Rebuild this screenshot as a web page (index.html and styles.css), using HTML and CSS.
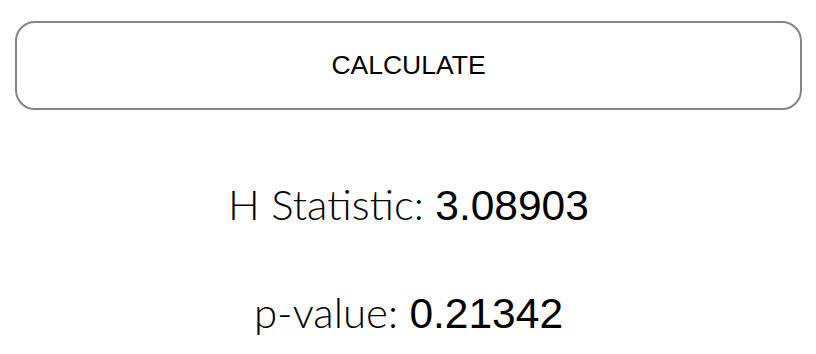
FILE: index.html
```html
<!DOCTYPE html>
<html lang="en">
<head>
    <meta charset="UTF-8">
    <meta name="viewport" content="width=device-width, initial-scale=1.0">
    <title>Kruskal-Wallis Test</title>
    <link rel="stylesheet" href="styles.css">
</head>
<body>

    <div class="page">
        <button class="calc-button" onclick="calculate()">CALCULATE</button>

        <div class="results">
            <p class="result">H Statistic: <span class="value" id="hStat">3.08903</span></p>
            <p class="result">p-value: <span class="value" id="pValue">0.21342</span></p>
        </div>
    </div>

    <script>
        function calculate() {
            document.getElementById("hStat").textContent = "3.08903";
            document.getElementById("pValue").textContent = "0.21342";
        }
    </script>

</body>
</html>
```

FILE: styles.css
```css
body {
    margin: 0;
    background-color: #fff;
    color: #000;
    font-family: "Liberation Sans", Arial, sans-serif;
}
.page {
    padding: 21px 14px 0 15px;
}
.calc-button {
    display: block;
    width: 100%;
    height: 89px;
    background-color: #fff;
    border: 2px solid #858585;
    border-radius: 20px;
    font-family: "Liberation Sans", Arial, sans-serif;
    font-size: 26.5px;
    color: #000;
    cursor: pointer;
}
.results {
    margin-top: 71px;
    text-align: center;
}
.result {
    margin: 0 0 60px 0;
    font-family: Lato, sans-serif;
    font-weight: 300;
    font-size: 42px;
    line-height: 46px;
}
.result:last-child {
    margin-bottom: 0;
}
.value {
    font-family: "Liberation Sans", Arial, sans-serif;
    font-weight: normal;
    font-size: 42.5px;
}
```
